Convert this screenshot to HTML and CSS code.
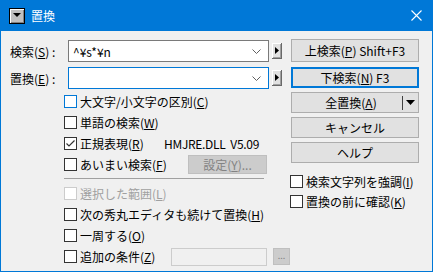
FILE: index.html
```html
<!DOCTYPE html>
<html lang="ja">
<head>
    <meta charset="UTF-8">
    <title>置換</title>
    <link rel="stylesheet" href="styles.css">
</head>
<body>
    <div class="window">
        <div class="titlebar">
            <span class="sysicon"><svg width="8" height="5" viewBox="0 0 8 5"><path d="M0 0H8L4 4Z" fill="#000"/></svg></span>
            <span class="title">置換</span>
            <span class="close"><svg width="11" height="11" viewBox="0 0 11 11"><path d="M0.5 0.5L10.5 10.5M10.5 0.5L0.5 10.5" stroke="#fff" stroke-width="1.1"/></svg></span>
        </div>
        <div class="body">
            <div class="leftcol">
                <div class="field">
                    <span class="label">検索(<u>S</u>) :</span>
                    <div class="combo">
                        <span class="value">^¥s*¥n</span>
                        <svg class="chev" width="9" height="5" viewBox="0 0 9 5"><path d="M0.5 0.5L4.5 4.5L8.5 0.5" stroke="#606060" fill="none"/></svg>
                    </div>
                    <span class="arrowbtn"><svg width="4" height="7" viewBox="0 0 4 7"><path d="M0 0V7L4 3.5Z" fill="#000"/></svg></span>
                </div>
                <div class="field second">
                    <span class="label">置換(<u>E</u>) :</span>
                    <div class="combo focused">
                        <span class="value"></span>
                        <svg class="chev" width="9" height="5" viewBox="0 0 9 5"><path d="M0.5 0.5L4.5 4.5L8.5 0.5" stroke="#606060" fill="none"/></svg>
                    </div>
                    <span class="arrowbtn"><svg width="4" height="7" viewBox="0 0 4 7"><path d="M0 0V7L4 3.5Z" fill="#000"/></svg></span>
                </div>

                <div class="options">
                    <div class="row">
                        <label class="check"><span class="box hot"></span><span>大文字/小文字の区別(<u>C</u>)</span></label>
                    </div>
                    <div class="row">
                        <label class="check"><span class="box"></span><span>単語の検索(<u>W</u>)</span></label>
                    </div>
                    <div class="row">
                        <label class="check w100"><span class="box"><svg width="11" height="11" viewBox="0 0 11 11"><path d="M1.5 5.5L4 8L9.5 2.5" stroke="#333" stroke-width="1.2" fill="none"/></svg></span><span>正規表現(<u>R</u>)</span></label>
                        <span class="dll">HMJRE.DLL&nbsp;&nbsp;V5.09</span>
                    </div>
                    <div class="row">
                        <label class="check w124"><span class="box"></span><span>あいまい検索(<u>F</u>)</span></label>
                        <span class="btn disabled setting"><span>設定(<u>Y</u>)...</span></span>
                    </div>
                    <div class="sep"></div>
                    <div class="row">
                        <label class="check off"><span class="box"></span><span>選択した範囲(<u>L</u>)</span></label>
                    </div>
                    <div class="row">
                        <label class="check"><span class="box"></span><span>次の秀丸エディタも続けて置換(<u>H</u>)</span></label>
                    </div>
                    <div class="row">
                        <label class="check"><span class="box"></span><span>一周する(<u>O</u>)</span></label>
                    </div>
                    <div class="row">
                        <label class="check w107"><span class="box"></span><span>追加の条件(<u>Z</u>)</span></label>
                        <span class="textbox"></span>
                        <span class="btn disabled dots">...</span>
                    </div>
                </div>
            </div>

            <div class="rightcol">
                <span class="btn big first"><span>上検索(<u>P</u>) Shift+F3</span></span>
                <span class="btn big default"><span>下検索(<u>N</u>) F3</span></span>
                <span class="btn big split"><span class="main">全置換(<u>A</u>)</span><span class="divider"></span><svg width="9" height="5" viewBox="0 0 9 5"><path d="M0 0H9L4.5 5Z" fill="#000"/></svg></span>
                <span class="btn big">キャンセル</span>
                <span class="btn big">ヘルプ</span>
                <div class="rightchecks">
                    <label class="check"><span class="box"></span><span>検索文字列を強調(<u>I</u>)</span></label>
                    <label class="check"><span class="box"></span><span>置換の前に確認(<u>K</u>)</span></label>
                </div>
            </div>
        </div>
    </div>
</body>
</html>
```

FILE: styles.css
```css
* {
    box-sizing: border-box;
}

body {
    margin: 0;
    font-family: "Noto Sans CJK JP", "Noto Sans", sans-serif;
    font-size: 12px;
    color: #000;
    background: #f0f0f0;
}

u {
    text-decoration: underline;
    text-underline-offset: 1px;
}

.window {
    width: 433px;
    height: 272px;
    border: 1px solid #0078d7;
    border-top: none;
    background: #f0f0f0;
    display: flex;
    flex-direction: column;
}

.titlebar {
    height: 31px;
    margin: 0 -1px;
    background: #0078d7;
    display: flex;
    align-items: center;
    padding-left: 9px;
    color: #fff;
}

.sysicon {
    width: 16px;
    height: 16px;
    border: 1px solid #000;
    background: #c0c0c0;
    box-shadow: inset 1px 1px 0 #fff, inset -1px -1px 0 #808080;
    display: flex;
    align-items: center;
    justify-content: center;
}

.title {
    margin-left: 6px;
    font-size: 12px;
}

.close {
    margin-left: auto;
    margin-right: 11px;
    display: flex;
}

.body {
    flex: 1;
    display: flex;
}

.leftcol {
    width: 290px;
    padding: 9px 0 0 9px;
}

.field {
    display: flex;
    align-items: center;
    height: 22px;
}

.field.second {
    margin-top: 5px;
}

.label {
    width: 58px;
}

.combo {
    width: 201px;
    height: 22px;
    background: #fff;
    border: 1px solid #7a7a7a;
    display: flex;
    align-items: center;
    padding: 0 4px 0 4px;
}

.combo.focused {
    border-color: #0078d7;
}

.combo .value {
    flex: 1;
}

.chev {
    margin-right: 3px;
}

.arrowbtn {
    width: 10px;
    height: 16px;
    margin-left: 3px;
    background: #e1e1e1;
    border-right: 1px solid #696969;
    border-bottom: 1px solid #696969;
    box-shadow: inset 1px 1px 0 #fff, inset -1px -1px 0 #a0a0a0;
    display: flex;
    align-items: center;
    justify-content: center;
}

.options {
    margin-top: 2px;
    margin-left: 54px;
}

.row {
    display: flex;
    align-items: center;
    height: 21px;
}

.check {
    display: flex;
    align-items: center;
    gap: 3px;
    white-space: nowrap;
}

.check.w100 {
    width: 100px;
}

.check.w124 {
    width: 124px;
}

.check.w107 {
    width: 107px;
}

.box {
    width: 13px;
    height: 13px;
    border: 1px solid #333;
    background: #fff;
    display: flex;
    align-items: center;
    justify-content: center;
}

.box.hot {
    border-color: #0078d7;
}

.check.off {
    color: #a0a0a0;
}

.check.off .box {
    border-color: #cccccc;
}

.dll {
    white-space: nowrap;
    letter-spacing: -0.3px;
}

.sep {
    width: 200px;
    height: 1px;
    background: #a0a0a0;
    margin: 3px 0 4px;
}

.btn {
    display: flex;
    align-items: center;
    justify-content: center;
    background: #e1e1e1;
    border: 1px solid #adadad;
    white-space: nowrap;
}

.btn.disabled {
    background: #cccccc;
    border-color: #bfbfbf;
    color: #838383;
}

.setting {
    width: 79px;
    height: 19px;
}

.textbox {
    width: 96px;
    height: 18px;
    border: 1px solid #cccccc;
    background: #f0f0f0;
}

.dots {
    width: 17px;
    height: 17px;
    margin-left: 6px;
    font-size: 9px;
    align-items: flex-end;
    padding-bottom: 2px;
}

.rightcol {
    width: 128px;
    padding-top: 8px;
    display: flex;
    flex-direction: column;
    gap: 4px;
}

.btn.big {
    height: 21px;
}

.btn.big.first {
    height: 23px;
}

.btn.default {
    border: 2px solid #0078d7;
    margin-top: 1px;
}

.btn.split {
    justify-content: flex-start;
    padding-right: 3px;
}

.split .main {
    flex: 1;
    text-align: center;
    padding-left: 8px;
}

.split .divider {
    width: 1px;
    height: 14px;
    background: #404040;
    margin-right: 3px;
}

.rightchecks {
    margin-top: 4px;
    margin-left: -1px;
    display: flex;
    flex-direction: column;
}

.rightchecks .check {
    height: 20px;
}
```
